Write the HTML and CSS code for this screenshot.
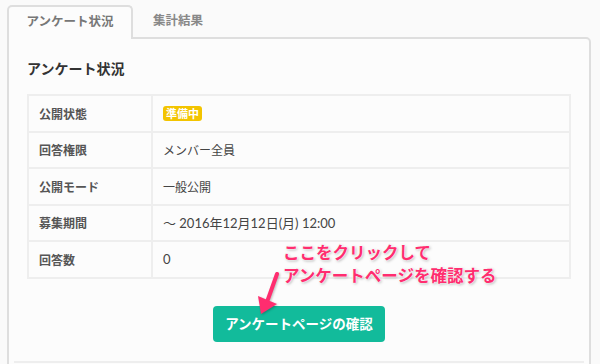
FILE: index.html
```html
<!DOCTYPE html>
<html lang="ja">
<head>
<meta charset="utf-8">
<link rel="stylesheet" href="styles.css">
</head>
<body>
<div class="page">
  <div class="tabs">
    <div class="tab active">アンケート状況</div>
    <div class="tab">集計結果</div>
  </div>
  <div class="panel">
    <h2 class="title">アンケート状況</h2>
    <table class="info">
      <tr><th>公開状態</th><td><span class="badge">準備中</span></td></tr>
      <tr><th>回答権限</th><td>メンバー全員</td></tr>
      <tr><th>公開モード</th><td>一般公開</td></tr>
      <tr><th>募集期間</th><td><span class="num">〜 2016年12月12日(月) 12:00</span></td></tr>
      <tr><th>回答数</th><td><span class="num">0</span></td></tr>
    </table>
    <div class="actions">
      <div class="btn-wrap">
        <a class="btn">アンケートページの確認</a>
        <div class="note">ここをクリックして<br>アンケートページを確認する</div>
        <svg class="arrow" width="30" height="44" viewBox="0 0 30 44">
          <path d="M24 2 L14 30" stroke="#ff2d6f" stroke-width="4" stroke-linecap="round" fill="none"/>
          <path d="M5 24 L24 32 L8 42 Z" fill="#ff2d6f"/>
        </svg>
      </div>
    </div>
    <div class="sep"></div>
  </div>
</div>
</body>
</html>
```
FILE: styles.css
```css
html, body {
  margin: 0;
  padding: 0;
  background: #fafafa;
}
body {
  font-family: Lato, "Noto Sans CJK JP", sans-serif;
  color: #444;
}
.page {
  padding: 5px 9px 0 7px;
}
.tabs {
  display: flex;
  align-items: flex-end;
  height: 32px;
}
.tab {
  height: 30px;
  box-sizing: border-box;
  font-size: 12.5px;
  font-weight: bold;
  color: #888;
  padding: 0 20px;
  line-height: 28px;
}
.tab.active {
  width: 126px;
  height: 34px;
  margin-bottom: -2px;
  border: 2px solid #dedede;
  border-bottom: none;
  border-radius: 5px 5px 0 0;
  background: #fcfcfc;
  color: #777;
  text-align: center;
  padding: 0;
  line-height: 30px;
  position: relative;
  z-index: 1;
}
.panel {
  border: 2px solid #dedede;
  border-radius: 0 5px 0 0;
  background: #fcfcfc;
  padding: 0 18px 0 18px;
  height: 340px;
  box-sizing: border-box;
}
.title {
  margin: 0;
  padding: 21px 0 0 0;
  font-size: 14px;
  line-height: 18px;
  font-weight: bold;
  color: #333;
}
.info {
  margin-top: 16px;
  width: 544px;
  border-collapse: collapse;
  border: 2px solid #eeeeee;
  font-size: 12px;
}
.info th, .info td {
  border: 2px solid #eeeeee;
  height: 36.5px;
  padding: 0 10px;
  text-align: left;
  box-sizing: border-box;
}
.info th {
  width: 124px;
  font-weight: bold;
  color: #555;
}
.info td {
  color: #444;
}
.num {
  font-size: 13px;
}
.badge {
  display: inline-block;
  background: #f3c400;
  color: #fff;
  font-size: 11px;
  font-weight: bold;
  line-height: 15px;
  padding: 0 3px;
  border-radius: 3px;
}
.actions {
  display: flex;
  justify-content: center;
  width: 544px;
  margin-top: 27px;
}
.btn-wrap {
  position: relative;
}
.btn {
  display: block;
  width: 172px;
  height: 36px;
  line-height: 36px;
  text-align: center;
  background: #12bb9b;
  color: #fff;
  font-size: 13.5px;
  font-weight: bold;
  border-radius: 4px;
}
.note {
  position: absolute;
  left: 70px;
  top: -64px;
  width: 240px;
  font-size: 16.5px;
  line-height: 23px;
  font-weight: bold;
  color: #ff2d6f;
  text-shadow: 0 0 2px #fff, 0 0 2px #fff, 1px 1px 3px rgba(0,0,0,0.35);
}
.arrow {
  position: absolute;
  left: 40px;
  top: -34px;
  filter: drop-shadow(1px 1px 1px rgba(0,0,0,0.25));
}
.sep {
  margin: 19px -13px 0 -13px;
  border-top: 2px solid #eeeeee;
}
```
